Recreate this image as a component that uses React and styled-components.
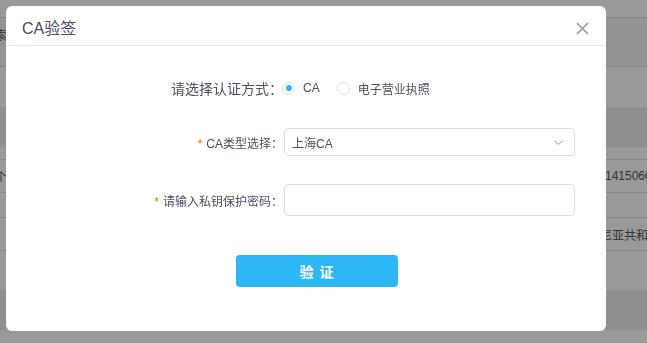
import React from 'react'
import styled, { createGlobalStyle } from 'styled-components'

const GlobalStyle = createGlobalStyle`
  html, body {
    margin: 0;
    padding: 0;
    width: 647px;
    height: 343px;
    overflow: hidden;
    font-family: "Liberation Sans", "Noto Sans CJK SC", sans-serif;
  }
`

const bgRows = [
  { h: 18, bg: '#fff', line: true },
  { h: 49, bg: '#f5f5f5', line: true, left: '检索', pad: 8 },
  { h: 40, bg: '#fff' },
  { h: 40, bg: '#eee' },
  { h: 13, bg: '#fff', line: true },
  { h: 33, bg: '#fff', line: true, left: '一个', right: '14150600001' },
  { h: 25, bg: '#fff', line: true },
  { h: 33, bg: '#fff', line: true, right: '尼亚共和国', shift: -5 },
  { h: 39, bg: '#fff' },
  { h: 40, bg: '#eee' },
  { h: 13, bg: '#fff' },
]

const App = () => {
  return (
    <>
      <GlobalStyle />
      <Table>
        {bgRows.map((row, i) => (
          <Row key={i} $h={row.h} $bg={row.bg} $line={row.line} $pad={row.pad}>
            <LeftCell>{row.left}</LeftCell>
            <RightCell $shift={row.shift}>{row.right}</RightCell>
          </Row>
        ))}
      </Table>
      <Mask />
      <Modal>
        <Header>
          <Title>CA验签</Title>
          <Close aria-label="close">
            <svg width="13" height="13" viewBox="0 0 13 13">
              <path d="M1 1L12 12M12 1L1 12" stroke="#999" strokeWidth="1.6" fill="none" />
            </svg>
          </Close>
        </Header>
        <Body>
          <FormItem $mt={28} $h={28}>
            <Label $size={14}>请选择认证方式：</Label>
            <RadioGroup>
              <RadioOption>
                <Radio $checked />
                CA
              </RadioOption>
              <RadioOption>
                <Radio />
                电子营业执照
              </RadioOption>
            </RadioGroup>
          </FormItem>
          <FormItem $mt={26} $h={28}>
            <Label><Star>*</Star>CA类型选择：</Label>
            <Select>
              <span>上海CA</span>
              <svg width="9" height="6" viewBox="0 0 9 6">
                <path d="M0.7 0.8L4.5 4.6L8.3 0.8" stroke="#8d95a6" strokeWidth="1" fill="none" />
              </svg>
            </Select>
          </FormItem>
          <FormItem $mt={28} $h={32}>
            <Label><Star>*</Star>请输入私钥保护密码：</Label>
            <Input type="password" />
          </FormItem>
          <ButtonRow>
            <SubmitButton>验 证</SubmitButton>
          </ButtonRow>
        </Body>
      </Modal>
    </>
  )
}

export default App

const Table = styled.div`
  display: flex;
  flex-direction: column;
  width: 647px;
  height: 343px;
  overflow: hidden;
`

const Row = styled.div`
  box-sizing: border-box;
  height: ${p => p.$h}px;
  flex-shrink: 0;
  background: ${p => p.$bg};
  border-bottom: ${p => (p.$line ? '1px solid #dcdee2' : 'none')};
  display: flex;
  align-items: ${p => (p.$pad ? 'flex-start' : 'center')};
  padding-top: ${p => p.$pad || 0}px;
  font-size: 12px;
  color: #555;
`

const LeftCell = styled.div`
  width: 7px;
  overflow: hidden;
  display: flex;
  justify-content: flex-end;
  white-space: nowrap;
`

const RightCell = styled.div`
  margin-left: auto;
  width: ${p => 42 - (p.$shift || 0)}px;
  white-space: nowrap;
  overflow: hidden;
`

const Mask = styled.div`
  position: fixed;
  inset: 0;
  background: rgba(0, 0, 0, 0.4);
`

const Modal = styled.div`
  position: fixed;
  left: 6px;
  top: 6px;
  width: 600px;
  height: 325px;
  background: #fff;
  border-radius: 6px;
  display: flex;
  flex-direction: column;
`

const Header = styled.div`
  height: 39px;
  border-bottom: 1px solid #e9eaec;
  display: flex;
  align-items: center;
  justify-content: space-between;
  padding: 0 17px 0 16px;
`

const Title = styled.div`
  font-size: 16px;
  color: #464c5b;
  padding-top: 2px;
`

const Close = styled.button`
  border: none;
  background: none;
  padding: 0;
  display: flex;
  margin-top: 6px;
  cursor: pointer;
`

const Body = styled.div`
  display: flex;
  flex-direction: column;
`

const FormItem = styled.div`
  display: grid;
  grid-template-columns: 277px 291px;
  column-gap: 1px;
  align-items: center;
  margin-top: ${p => p.$mt}px;
  height: ${p => p.$h}px;
`

const Label = styled.label`
  justify-self: end;
  font-size: ${p => p.$size || 12}px;
  color: #495060;
  white-space: nowrap;
`

const Star = styled.span`
  color: #f60;
  margin-right: 4px;
  font-size: 12px;
`

const RadioGroup = styled.div`
  display: flex;
  align-items: center;
  gap: 17px;
  margin-left: -2px;
`

const RadioOption = styled.label`
  display: flex;
  align-items: center;
  gap: 8px;
  font-size: 12px;
  color: #495060;
`

const Radio = styled.span`
  box-sizing: border-box;
  width: 13px;
  height: 13px;
  border-radius: 50%;
  border: 1px solid ${p => (p.$checked ? '#cfe3f0' : '#dddee1')};
  display: flex;
  align-items: center;
  justify-content: center;

  &::after {
    content: '';
    width: 6px;
    height: 6px;
    border-radius: 50%;
    background: ${p => (p.$checked ? '#2db7f5' : 'transparent')};
  }
`

const Select = styled.div`
  box-sizing: border-box;
  height: 28px;
  border: 1px solid #dddee1;
  border-radius: 4px;
  display: flex;
  align-items: center;
  justify-content: space-between;
  padding: 0 11px 0 7px;
  font-size: 12px;
  color: #495060;

  svg {
    margin-top: 1px;
  }
`

const Input = styled.input`
  box-sizing: border-box;
  height: 32px;
  width: 100%;
  border: 1px solid #dddee1;
  border-radius: 4px;
  outline: none;
  padding: 0 7px;
`

const ButtonRow = styled.div`
  margin-top: 39px;
  padding-left: 230px;
`

const SubmitButton = styled.button`
  width: 162px;
  height: 32px;
  border: none;
  border-radius: 4px;
  background: #2db7f5;
  color: #fff;
  font-family: "Liberation Sans", "Noto Sans CJK SC", sans-serif;
  font-size: 14px;
  font-weight: bold;
  letter-spacing: 1px;
  cursor: pointer;
`
